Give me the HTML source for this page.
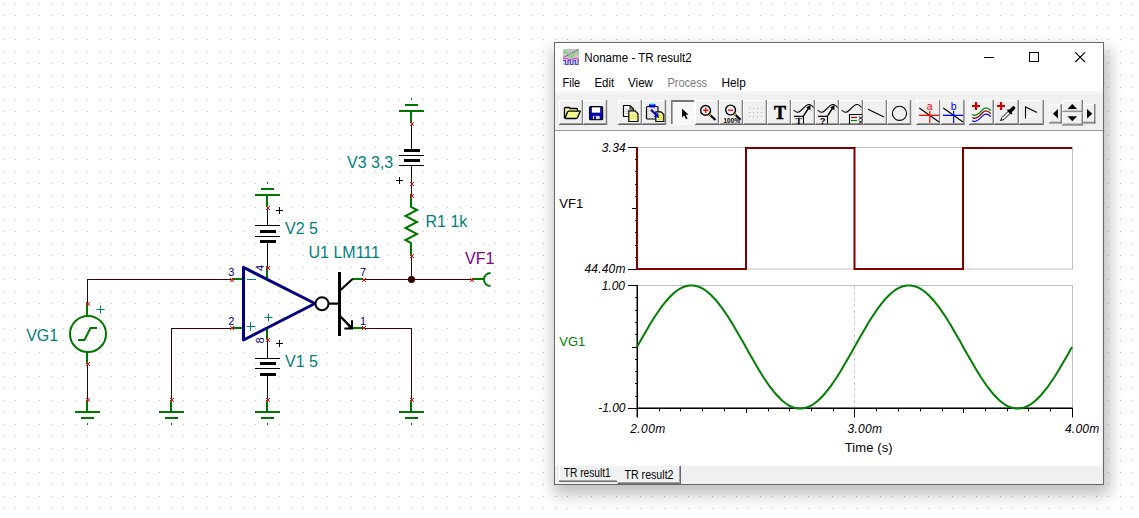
<!DOCTYPE html>
<html lang="en"><head><meta charset="utf-8"><title>Noname - TR result2</title>
<style>html,body{margin:0;padding:0;background:#fff;overflow:hidden}svg{display:block;position:absolute;left:0;top:0}text{font-family:"Liberation Sans",Arial,sans-serif}.lbl{font-size:16px;fill:#008080}.pin{font-size:11px;fill:#000080}.ax{font-size:12px;font-style:italic;fill:#000}.ui{font-size:12px;fill:#000}</style></head><body>
<svg width="1139" height="518" viewBox="0 0 1139 518">
<defs>
<pattern id="g" x="0" y="0" width="12" height="12" patternUnits="userSpaceOnUse"><rect x="3" y="3" width="1" height="1" fill="#c0c0c0"/></pattern>
<pattern id="gx" x="1" y="0" width="12" height="12" patternUnits="userSpaceOnUse"><rect x="3" y="3" width="1" height="1" fill="#c0c0c0"/></pattern>
<pattern id="gy" x="0" y="1" width="12" height="12" patternUnits="userSpaceOnUse"><rect x="3" y="3" width="1" height="1" fill="#c0c0c0"/></pattern>
<pattern id="gxy" x="1" y="1" width="12" height="12" patternUnits="userSpaceOnUse"><rect x="3" y="3" width="1" height="1" fill="#c0c0c0"/></pattern>
<filter id="sh" x="-10%" y="-10%" width="120%" height="125%"><feGaussianBlur stdDeviation="8"/></filter>
</defs>
<rect width="1139" height="518" fill="#fff"/>
<rect x="0" y="0" width="610" height="322" fill="url(#g)"/>
<rect x="610" y="0" width="529" height="322" fill="url(#gx)"/>
<rect x="0" y="322" width="610" height="196" fill="url(#gy)"/>
<rect x="610" y="322" width="529" height="196" fill="url(#gxy)"/>
<g id="circuit">
<rect x="87" y="279" width="146" height="1" fill="#400000"/>
<rect x="87" y="279" width="1" height="25" fill="#400000"/>
<rect x="87" y="364" width="1" height="37" fill="#400000"/>
<rect x="171" y="328" width="62" height="1" fill="#400000"/>
<rect x="171" y="328" width="1" height="73" fill="#400000"/>
<rect x="363" y="279" width="110" height="1" fill="#400000"/>
<rect x="363" y="328" width="49" height="1" fill="#400000"/>
<rect x="411" y="328" width="1" height="73" fill="#400000"/>
<rect x="411" y="255" width="1" height="25" fill="#400000"/>
<rect x="411" y="183" width="1" height="14" fill="#400000"/>
<circle cx="411.5" cy="279.5" r="3.6" fill="#300000"/>
<rect x="86" y="303" width="2" height="13" fill="#007800"/>
<rect x="86" y="352" width="2" height="12" fill="#007800"/>
<circle cx="88" cy="334" r="18" fill="none" stroke="#007800" stroke-width="2"/>
<path d="M78 340H84.5L90.5 328H97" fill="none" stroke="#007800" stroke-width="2"/>
<path d="M96.5 309.5h8M100.5 305.5v8" stroke="#008080" stroke-width="1" fill="none"/>
<text class="lbl" x="26.2" y="340.5">VG1</text>
<rect x="86" y="400" width="2" height="12" fill="#007800"/><rect x="75" y="411" width="25" height="2" fill="#007800"/><rect x="81" y="417" width="13" height="2" fill="#007800"/><rect x="87" y="423" width="1" height="2" fill="#007800"/>
<rect x="170" y="400" width="2" height="12" fill="#007800"/><rect x="159" y="411" width="25" height="2" fill="#007800"/><rect x="165" y="417" width="13" height="2" fill="#007800"/><rect x="171" y="423" width="1" height="2" fill="#007800"/>
<rect x="266" y="400" width="2" height="12" fill="#007800"/><rect x="255" y="411" width="25" height="2" fill="#007800"/><rect x="261" y="417" width="13" height="2" fill="#007800"/><rect x="267" y="423" width="1" height="2" fill="#007800"/>
<rect x="410" y="400" width="2" height="12" fill="#007800"/><rect x="399" y="411" width="25" height="2" fill="#007800"/><rect x="405" y="417" width="13" height="2" fill="#007800"/><rect x="411" y="423" width="1" height="2" fill="#007800"/>
<rect x="266" y="195" width="2" height="12" fill="#007800"/><rect x="255" y="194" width="25" height="2" fill="#007800"/><rect x="261" y="188" width="13" height="2" fill="#007800"/><rect x="267" y="182" width="1" height="2" fill="#007800"/>
<rect x="410" y="111" width="2" height="12" fill="#007800"/><rect x="399" y="110" width="25" height="2" fill="#007800"/><rect x="405" y="104" width="13" height="2" fill="#007800"/><rect x="411" y="98" width="1" height="2" fill="#007800"/>
<rect x="267" y="207" width="1" height="18" fill="#000"/><rect x="267" y="240" width="1" height="27" fill="#000"/><rect x="255" y="225" width="25" height="1" fill="#000"/><rect x="260" y="230" width="16" height="3" fill="#000"/><rect x="255" y="236" width="25" height="1" fill="#000"/><rect x="260" y="240" width="16" height="3" fill="#000"/><rect x="276" y="210" width="7" height="1" fill="#000"/><rect x="279" y="207" width="1" height="7" fill="#000"/>
<rect x="267" y="340" width="1" height="18" fill="#000"/><rect x="267" y="373" width="1" height="27" fill="#000"/><rect x="255" y="358" width="25" height="1" fill="#000"/><rect x="260" y="362" width="16" height="3" fill="#000"/><rect x="255" y="368" width="25" height="1" fill="#000"/><rect x="260" y="373" width="16" height="3" fill="#000"/><rect x="276" y="343" width="7" height="1" fill="#000"/><rect x="279" y="340" width="1" height="7" fill="#000"/>
<rect x="411" y="123" width="1" height="26" fill="#000"/><rect x="411" y="165" width="1" height="18" fill="#000"/><rect x="404" y="149" width="16" height="3" fill="#000"/><rect x="399" y="155" width="25" height="1" fill="#000"/><rect x="404" y="159" width="16" height="3" fill="#000"/><rect x="399" y="165" width="25" height="1" fill="#000"/><rect x="396" y="180" width="7" height="1" fill="#000"/><rect x="399" y="177" width="1" height="7" fill="#000"/>
<text class="lbl" x="285" y="233.5">V2 5</text>
<text class="lbl" x="285" y="366.5">V1 5</text>
<text class="lbl" x="347" y="167.5">V3 3,3</text>
<path d="M411 195V207L417 210L405.5 216L417 222L405.5 228L417 234L405.5 240L411 243V256" fill="none" stroke="#007800" stroke-width="2" stroke-linejoin="miter"/>
<text class="lbl" x="425.5" y="226.5">R1 1k</text>
<rect x="232" y="278" width="11" height="2" fill="#007800"/>
<rect x="232" y="327" width="11" height="2" fill="#007800"/>
<rect x="266" y="267" width="2" height="12" fill="#007800"/>
<rect x="266" y="329" width="2" height="11" fill="#007800"/>
<rect x="352" y="278" width="11" height="2" fill="#007800"/>
<rect x="352" y="327" width="11" height="2" fill="#007800"/>
<path d="M243.5 267.4L243.5 340L315 303.5Z" fill="none" stroke="#000080" stroke-width="3" stroke-linejoin="round"/>
<path d="M247 279.5h9" stroke="#008080" stroke-width="1"/>
<path d="M246.5 326.5h9M250.5 322v9" stroke="#008080" stroke-width="1" fill="none"/>
<path d="M264.5 317.5h8M268.5 313.5v8" stroke="#008080" stroke-width="1" fill="none"/>
<circle cx="322" cy="303.7" r="6.5" fill="#fff" stroke="#000" stroke-width="2"/>
<rect x="329" y="302.5" width="10" height="2.2" fill="#000"/>
<rect x="338" y="272" width="3" height="64" fill="#000"/>
<path d="M340 290.5L352.5 279" stroke="#000" stroke-width="2.2" fill="none"/>
<path d="M340 316L351.5 327.8" stroke="#000" stroke-width="2.4" fill="none"/>
<path d="M352 320.3V328.4H344.3" fill="none" stroke="#000" stroke-width="2" stroke-linejoin="miter"/>
<path d="M349 324.5L351.5 327.5L348 327.5Z" fill="#000"/>
<text class="pin" x="228.3" y="276">3</text>
<text class="pin" x="228.3" y="324.5">2</text>
<text class="pin" x="360" y="276">7</text>
<text class="pin" x="360" y="324.5">1</text>
<text class="pin" transform="translate(264 271) rotate(-90)">4</text>
<text class="pin" transform="translate(264 343.5) rotate(-90)">8</text>
<text class="lbl" x="308.5" y="257.5">U1 LM111</text>
<rect x="472" y="278" width="12" height="2" fill="#007800"/>
<path d="M490.5 273A6.5 6.5 0 0 0 490.5 286" fill="none" stroke="#007800" stroke-width="2"/>
<text class="lbl" style="fill:#800080" x="465" y="263.5">VF1</text>
<path d="M86 302h1v1h-1zM89 302h1v1h-1zM86 305h1v1h-1zM89 305h1v1h-1zM87 303h2v2h-2z" fill="#ff0000"/>
<path d="M86 362h1v1h-1zM89 362h1v1h-1zM86 365h1v1h-1zM89 365h1v1h-1zM87 363h2v2h-2z" fill="#ff0000"/>
<path d="M86 398h1v1h-1zM89 398h1v1h-1zM86 401h1v1h-1zM89 401h1v1h-1zM87 399h2v2h-2z" fill="#ff0000"/>
<path d="M170 398h1v1h-1zM173 398h1v1h-1zM170 401h1v1h-1zM173 401h1v1h-1zM171 399h2v2h-2z" fill="#ff0000"/>
<path d="M266 398h1v1h-1zM269 398h1v1h-1zM266 401h1v1h-1zM269 401h1v1h-1zM267 399h2v2h-2z" fill="#ff0000"/>
<path d="M410 398h1v1h-1zM413 398h1v1h-1zM410 401h1v1h-1zM413 401h1v1h-1zM411 399h2v2h-2z" fill="#ff0000"/>
<path d="M230 278h1v1h-1zM233 278h1v1h-1zM230 281h1v1h-1zM233 281h1v1h-1zM231 279h2v2h-2z" fill="#ff0000"/>
<path d="M230 326h1v1h-1zM233 326h1v1h-1zM230 329h1v1h-1zM233 329h1v1h-1zM231 327h2v2h-2z" fill="#ff0000"/>
<path d="M266 266h1v1h-1zM269 266h1v1h-1zM266 269h1v1h-1zM269 269h1v1h-1zM267 267h2v2h-2z" fill="#ff0000"/>
<path d="M266 338h1v1h-1zM269 338h1v1h-1zM266 341h1v1h-1zM269 341h1v1h-1zM267 339h2v2h-2z" fill="#ff0000"/>
<path d="M362 278h1v1h-1zM365 278h1v1h-1zM362 281h1v1h-1zM365 281h1v1h-1zM363 279h2v2h-2z" fill="#ff0000"/>
<path d="M362 326h1v1h-1zM365 326h1v1h-1zM362 329h1v1h-1zM365 329h1v1h-1zM363 327h2v2h-2z" fill="#ff0000"/>
<path d="M266 206h1v1h-1zM269 206h1v1h-1zM266 209h1v1h-1zM269 209h1v1h-1zM267 207h2v2h-2z" fill="#ff0000"/>
<path d="M410 122h1v1h-1zM413 122h1v1h-1zM410 125h1v1h-1zM413 125h1v1h-1zM411 123h2v2h-2z" fill="#ff0000"/>
<path d="M410 182h1v1h-1zM413 182h1v1h-1zM410 185h1v1h-1zM413 185h1v1h-1zM411 183h2v2h-2z" fill="#ff0000"/>
<path d="M410 194h1v1h-1zM413 194h1v1h-1zM410 197h1v1h-1zM413 197h1v1h-1zM411 195h2v2h-2z" fill="#ff0000"/>
<path d="M410 254h1v1h-1zM413 254h1v1h-1zM410 257h1v1h-1zM413 257h1v1h-1zM411 255h2v2h-2z" fill="#ff0000"/>
<path d="M470 278h1v1h-1zM473 278h1v1h-1zM470 281h1v1h-1zM473 281h1v1h-1zM471 279h2v2h-2z" fill="#ff0000"/>
</g>
<g id="win">
<rect x="553" y="48" width="557" height="447" fill="#000" opacity="0.25" filter="url(#sh)"/>
<rect x="554.5" y="42.5" width="549" height="442" fill="#fff" stroke="#686868" stroke-width="1"/>
<g transform="translate(563 49)"><rect x="0" y="0" width="16" height="10" fill="#c4c4c4"/><rect x="0" y="10" width="16" height="6" fill="#d8d4c4"/><path d="M0.3 8.7L15.7 0.4" stroke="#8c2c8c" stroke-width="1" stroke-dasharray="1.2 0.8" fill="none"/><path d="M0 3.6Q2 1.2 4 3.8L6 6.5Q8 9.3 10 6.6L12 3.8Q14 1.4 16 4.2" stroke="#58e058" stroke-width="1.1" fill="none"/><path d="M0 9.6H4.8V10.3H9.8V9.6H14.8V10.3H16" stroke="#e040e0" stroke-width="1" fill="none"/><path d="M0 11.5H2.5V15.5H5V11.5H7.4V15.5H10V11.5H12.4V15.5H15V11.5H16" stroke="#4848e8" stroke-width="1.1" fill="none"/></g>
<text class="ui" x="584.3" y="62" textLength="107.5" lengthAdjust="spacingAndGlyphs">Noname - TR result2</text>
<path d="M984 57.5h10" stroke="#000" stroke-width="1"/>
<rect x="1029.5" y="52.5" width="9" height="9" fill="none" stroke="#000" stroke-width="1"/>
<path d="M1075.3 52.3l9.7 9.7M1085 52.3l-9.7 9.7" stroke="#000" stroke-width="1.1" fill="none"/>
<text class="ui" x="562.6" y="86.7" fill="#000" style="fill:#000" textLength="17.6" lengthAdjust="spacingAndGlyphs">File</text>
<text class="ui" x="594.5" y="86.7" fill="#000" style="fill:#000" textLength="19.6" lengthAdjust="spacingAndGlyphs">Edit</text>
<text class="ui" x="628.0" y="86.7" fill="#000" style="fill:#000" textLength="25" lengthAdjust="spacingAndGlyphs">View</text>
<text class="ui" x="667.5" y="86.7" fill="#7a7a7a" style="fill:#7a7a7a" textLength="39.6" lengthAdjust="spacingAndGlyphs">Process</text>
<text class="ui" x="721.5" y="86.7" fill="#000" style="fill:#000" textLength="24.3" lengthAdjust="spacingAndGlyphs">Help</text>
<rect x="555" y="91" width="548" height="2.5" fill="#f6f6f6"/>
<rect x="555" y="93.5" width="548" height="36.5" fill="#f0f0f0"/>
<rect x="555" y="130" width="548" height="1" fill="#9a9a9a"/>
<rect x="559" y="100" width="24.2" height="25" fill="#f0f0f0"/><rect x="559" y="100" width="24.2" height="1" fill="#fff"/><rect x="559" y="100" width="1" height="25" fill="#fff"/><rect x="560" y="123" width="23.2" height="1" fill="#9a9a9a"/><rect x="559" y="124" width="24.2" height="1" fill="#646464"/><rect x="581.7" y="100" width="1.5" height="25" fill="#828282"/>
<rect x="583" y="100" width="24.2" height="25" fill="#f0f0f0"/><rect x="583" y="100" width="24.2" height="1" fill="#fff"/><rect x="583" y="100" width="1" height="25" fill="#fff"/><rect x="584" y="123" width="23.2" height="1" fill="#9a9a9a"/><rect x="583" y="124" width="24.2" height="1" fill="#646464"/><rect x="605.7" y="100" width="1.5" height="25" fill="#828282"/>
<rect x="618" y="100" width="24.2" height="25" fill="#f0f0f0"/><rect x="618" y="100" width="24.2" height="1" fill="#fff"/><rect x="618" y="100" width="1" height="25" fill="#fff"/><rect x="619" y="123" width="23.2" height="1" fill="#9a9a9a"/><rect x="618" y="124" width="24.2" height="1" fill="#646464"/><rect x="640.7" y="100" width="1.5" height="25" fill="#828282"/>
<rect x="642" y="100" width="24.2" height="25" fill="#f0f0f0"/><rect x="642" y="100" width="24.2" height="1" fill="#fff"/><rect x="642" y="100" width="1" height="25" fill="#fff"/><rect x="643" y="123" width="23.2" height="1" fill="#9a9a9a"/><rect x="642" y="124" width="24.2" height="1" fill="#646464"/><rect x="664.7" y="100" width="1.5" height="25" fill="#828282"/>
<rect x="671" y="100" width="24.2" height="25" fill="#f8f8f8"/><rect x="671" y="100" width="24.2" height="2" fill="#787878"/><rect x="671" y="100" width="1.6" height="25" fill="#787878"/><rect x="671" y="124" width="24.2" height="1" fill="#fff"/><rect x="694.2" y="100" width="1" height="25" fill="#fff"/>
<rect x="695" y="100" width="24.2" height="25" fill="#f0f0f0"/><rect x="695" y="100" width="24.2" height="1" fill="#fff"/><rect x="695" y="100" width="1" height="25" fill="#fff"/><rect x="696" y="123" width="23.2" height="1" fill="#9a9a9a"/><rect x="695" y="124" width="24.2" height="1" fill="#646464"/><rect x="717.7" y="100" width="1.5" height="25" fill="#828282"/>
<rect x="719" y="100" width="24.2" height="25" fill="#f0f0f0"/><rect x="719" y="100" width="24.2" height="1" fill="#fff"/><rect x="719" y="100" width="1" height="25" fill="#fff"/><rect x="720" y="123" width="23.2" height="1" fill="#9a9a9a"/><rect x="719" y="124" width="24.2" height="1" fill="#646464"/><rect x="741.7" y="100" width="1.5" height="25" fill="#828282"/>
<rect x="743" y="100" width="24.2" height="25" fill="#f0f0f0"/><rect x="743" y="100" width="24.2" height="1" fill="#fff"/><rect x="743" y="100" width="1" height="25" fill="#fff"/><rect x="744" y="123" width="23.2" height="1" fill="#9a9a9a"/><rect x="743" y="124" width="24.2" height="1" fill="#646464"/><rect x="765.7" y="100" width="1.5" height="25" fill="#828282"/>
<rect x="767" y="100" width="24.2" height="25" fill="#f0f0f0"/><rect x="767" y="100" width="24.2" height="1" fill="#fff"/><rect x="767" y="100" width="1" height="25" fill="#fff"/><rect x="768" y="123" width="23.2" height="1" fill="#9a9a9a"/><rect x="767" y="124" width="24.2" height="1" fill="#646464"/><rect x="789.7" y="100" width="1.5" height="25" fill="#828282"/>
<rect x="791" y="100" width="24.2" height="25" fill="#f0f0f0"/><rect x="791" y="100" width="24.2" height="1" fill="#fff"/><rect x="791" y="100" width="1" height="25" fill="#fff"/><rect x="792" y="123" width="23.2" height="1" fill="#9a9a9a"/><rect x="791" y="124" width="24.2" height="1" fill="#646464"/><rect x="813.7" y="100" width="1.5" height="25" fill="#828282"/>
<rect x="815" y="100" width="24.2" height="25" fill="#f0f0f0"/><rect x="815" y="100" width="24.2" height="1" fill="#fff"/><rect x="815" y="100" width="1" height="25" fill="#fff"/><rect x="816" y="123" width="23.2" height="1" fill="#9a9a9a"/><rect x="815" y="124" width="24.2" height="1" fill="#646464"/><rect x="837.7" y="100" width="1.5" height="25" fill="#828282"/>
<rect x="839" y="100" width="24.2" height="25" fill="#f0f0f0"/><rect x="839" y="100" width="24.2" height="1" fill="#fff"/><rect x="839" y="100" width="1" height="25" fill="#fff"/><rect x="840" y="123" width="23.2" height="1" fill="#9a9a9a"/><rect x="839" y="124" width="24.2" height="1" fill="#646464"/><rect x="861.7" y="100" width="1.5" height="25" fill="#828282"/>
<rect x="863" y="100" width="24.2" height="25" fill="#f0f0f0"/><rect x="863" y="100" width="24.2" height="1" fill="#fff"/><rect x="863" y="100" width="1" height="25" fill="#fff"/><rect x="864" y="123" width="23.2" height="1" fill="#9a9a9a"/><rect x="863" y="124" width="24.2" height="1" fill="#646464"/><rect x="885.7" y="100" width="1.5" height="25" fill="#828282"/>
<rect x="887" y="100" width="24.2" height="25" fill="#f0f0f0"/><rect x="887" y="100" width="24.2" height="1" fill="#fff"/><rect x="887" y="100" width="1" height="25" fill="#fff"/><rect x="888" y="123" width="23.2" height="1" fill="#9a9a9a"/><rect x="887" y="124" width="24.2" height="1" fill="#646464"/><rect x="909.7" y="100" width="1.5" height="25" fill="#828282"/>
<rect x="916.3" y="100" width="24.2" height="25" fill="#f0f0f0"/><rect x="916.3" y="100" width="24.2" height="1" fill="#fff"/><rect x="916.3" y="100" width="1" height="25" fill="#fff"/><rect x="917.3" y="123" width="23.2" height="1" fill="#9a9a9a"/><rect x="916.3" y="124" width="24.2" height="1" fill="#646464"/><rect x="939.0" y="100" width="1.5" height="25" fill="#828282"/>
<rect x="940.4" y="100" width="24.2" height="25" fill="#f0f0f0"/><rect x="940.4" y="100" width="24.2" height="1" fill="#fff"/><rect x="940.4" y="100" width="1" height="25" fill="#fff"/><rect x="941.4" y="123" width="23.2" height="1" fill="#9a9a9a"/><rect x="940.4" y="124" width="24.2" height="1" fill="#646464"/><rect x="963.1" y="100" width="1.5" height="25" fill="#828282"/>
<rect x="969" y="100" width="25" height="25" fill="#f0f0f0"/><rect x="969" y="100" width="25" height="1" fill="#fff"/><rect x="969" y="100" width="1" height="25" fill="#fff"/><rect x="970" y="123" width="24" height="1" fill="#9a9a9a"/><rect x="969" y="124" width="25" height="1" fill="#646464"/><rect x="992.5" y="100" width="1.5" height="25" fill="#828282"/>
<rect x="994" y="100" width="25" height="25" fill="#f0f0f0"/><rect x="994" y="100" width="25" height="1" fill="#fff"/><rect x="994" y="100" width="1" height="25" fill="#fff"/><rect x="995" y="123" width="24" height="1" fill="#9a9a9a"/><rect x="994" y="124" width="25" height="1" fill="#646464"/><rect x="1017.5" y="100" width="1.5" height="25" fill="#828282"/>
<rect x="1019" y="100" width="25" height="25" fill="#f0f0f0"/><rect x="1019" y="100" width="25" height="1" fill="#fff"/><rect x="1019" y="100" width="1" height="25" fill="#fff"/><rect x="1020" y="123" width="24" height="1" fill="#9a9a9a"/><rect x="1019" y="124" width="25" height="1" fill="#646464"/><rect x="1042.5" y="100" width="1.5" height="25" fill="#828282"/>
<g><path d="M564.5 118V108.5Q564.5 107.5 565.5 107.5H569Q570 107.5 570 108.5H576.5Q577.5 108.5 577.5 109.5V111.5" fill="#f6f690" stroke="#000" stroke-width="1.3"/><path d="M565 118.3L567.5 112Q568 111.2 569 111.2H580.3L577.5 117.5Q577 118.5 576 118.5H565.5Z" fill="#f6f690" stroke="#000" stroke-width="1.3" stroke-linejoin="round"/></g>
<g><rect x="589.6" y="106.6" width="13" height="13" rx="1.2" fill="#0000ff" stroke="#000" stroke-width="1.3"/><rect x="591.5" y="107" width="9" height="6" fill="#fff" stroke="#000" stroke-width="0.6"/><rect x="592.5" y="115.5" width="7.5" height="3.8" fill="#d8d8d8" stroke="#000" stroke-width="0.6"/><rect x="594" y="116.3" width="2" height="2.7" fill="#0000e0"/></g>
<g><path d="M623.5 105.5H630L633.5 109V116.5H623.5Z" fill="#fff" stroke="#000" stroke-width="1.2"/><path d="M630 105.5V109H633.5" fill="none" stroke="#000" stroke-width="1"/><path d="M625.5 109.5h4M625.5 111.5h3M625.5 113.5h3" stroke="#c0c0c0" stroke-width="1"/><path d="M628.8 110.8H635L638 113.8V121.5H628.8Z" fill="#f8f8a0" stroke="#000" stroke-width="1.2"/><path d="M630.5 114.5h6M630.5 116.5h6M630.5 118.5h6" stroke="#e8e000" stroke-width="1"/><path d="M632 113v7M634.5 113v7" stroke="#fff" stroke-width="0.8"/></g>
<g><rect x="646.5" y="106.5" width="11.5" height="12.5" rx="1" fill="#e4e4e4" stroke="#000" stroke-width="1.2"/><rect x="649" y="104" width="6.5" height="3.5" rx="1" fill="#0000e0"/><rect x="650" y="103.5" width="4.5" height="1.3" fill="#00e0ff"/><path d="M655.8 111.8H661L663.8 114.5V121.5H655.8Z" fill="#f8f8a0" stroke="#000" stroke-width="1.2"/><path d="M658 115.5h4.5M658 117.5h4.5M658 119.5h4.5" stroke="#e8e000" stroke-width="1"/><path d="M651 109.8L656.5 115.3" stroke="#0000b0" stroke-width="2"/><path d="M659 117.8L653.6 116.8L658 112.4Z" fill="#0000e0"/></g>
<path d="M682 108.5V117.5L684.2 115.5L686 119.3L687.6 118.5L685.8 114.8L688.6 114.8Z" fill="#000"/>
<g><circle cx="705.6" cy="110.4" r="4.9" fill="#f0f0f0" stroke="#000" stroke-width="1.4"/><path d="M703 110.4h5.4M705.7 107.7v5.4" stroke="#ff0000" stroke-width="1.3"/><path d="M709.3 114.2L715.5 120" stroke="#000" stroke-width="2.2"/><path d="M709.3 114.2L710.8 115.6" stroke="#e8e000" stroke-width="1.2"/></g>
<g><circle cx="730.6" cy="110" r="4.9" fill="#f0f0f0" stroke="#000" stroke-width="1.4"/><path d="M728 110.2h5.2" stroke="#ff0000" stroke-width="1.3"/><path d="M734.3 113.8L740.5 119.8" stroke="#000" stroke-width="2.2"/><path d="M734.3 113.8L735.8 115.2" stroke="#e8e000" stroke-width="1.2"/><text x="723.5" y="123.4" style="font-size:8px;font-weight:bold;fill:#000" textLength="16.5" lengthAdjust="spacingAndGlyphs">100%</text></g>
<g><rect x="749" y="108" width="1" height="1" fill="#b8b8b8"/><rect x="749" y="112" width="1" height="1" fill="#b8b8b8"/><rect x="749" y="116" width="1" height="1" fill="#b8b8b8"/><rect x="753" y="108" width="1" height="1" fill="#b8b8b8"/><rect x="753" y="112" width="1" height="1" fill="#b8b8b8"/><rect x="753" y="116" width="1" height="1" fill="#b8b8b8"/><rect x="757" y="108" width="1" height="1" fill="#b8b8b8"/><rect x="757" y="112" width="1" height="1" fill="#b8b8b8"/><rect x="757" y="116" width="1" height="1" fill="#b8b8b8"/><rect x="761" y="108" width="1" height="1" fill="#b8b8b8"/><rect x="761" y="112" width="1" height="1" fill="#b8b8b8"/><rect x="761" y="116" width="1" height="1" fill="#b8b8b8"/></g>
<text x="774" y="119" style="font-family:'Liberation Serif',serif;font-size:18px;font-weight:bold;fill:#000;stroke:#000;stroke-width:0.5px" textLength="12" lengthAdjust="spacingAndGlyphs">T</text>
<g><path d="M793.8 110Q797 114.2 801 110.5L805.5 106.2Q809.5 102.2 813.5 107.5" fill="none" stroke="#000" stroke-width="1.1"/><path d="M794 116.4H804M803.5 116V123.5" stroke="#000" stroke-width="1.1" fill="none"/><path d="M803.5 115.8L809 107.5" stroke="#000" stroke-width="1.4"/><path d="M810.6 104.8L810.3 110.3L806.3 107.6Z" fill="#000"/><text x="795.6" y="123.5" style="font-family:'Liberation Serif',serif;font-size:8.5px;font-weight:bold;fill:#000" textLength="6.6" lengthAdjust="spacingAndGlyphs">T</text></g>
<g><path d="M817.8 110Q821 114.2 825 110.5L829.5 106.2Q833.5 102.2 837.5 107.5" fill="none" stroke="#000" stroke-width="1.1"/><path d="M818 116.4H828M827.5 116V123.5" stroke="#000" stroke-width="1.1" fill="none"/><path d="M827.5 115.8L833 107.5" stroke="#000" stroke-width="1.4"/><path d="M834.6 104.8L834.3 110.3L830.3 107.6Z" fill="#000"/><text x="819.8" y="124.3" style="font-size:9.5px;font-weight:bold;fill:#000">?</text></g>
<g><path d="M841.8 110Q845 114.2 849 110.5L853.5 106.2Q857.5 102.2 861.5 107.5" fill="none" stroke="#000" stroke-width="1.1"/><path d="M849.5 124V114.5H862" stroke="#000" stroke-width="1.1" fill="none"/><path d="M851 117.4h6" stroke="#900000" stroke-width="1.1"/><path d="M851 120.5h6" stroke="#008000" stroke-width="1.1"/><path d="M859 116.5l3 3M862 116.5l-3 3M859 120.5l3 3M862 120.5l-3 3" stroke="#000" stroke-width="1"/></g>
<path d="M868 109.2L884 116.9" stroke="#000" stroke-width="1.1"/>
<circle cx="899.5" cy="113.3" r="7.1" fill="none" stroke="#000" stroke-width="1.1"/>
<g><path d="M919.3 108L939 122" stroke="#000" stroke-width="1.1"/><path d="M919 115.4H939M929.8 111V123" stroke="#ff0000" stroke-width="1.2" fill="none"/><text x="926.8" y="109.7" style="font-size:10.5px;fill:#ff0000">a</text></g>
<g><path d="M943.3 108L963 122" stroke="#000" stroke-width="1.1"/><path d="M943 115.4H963M953.6 111V123" stroke="#0000ff" stroke-width="1.2" fill="none"/><text x="950.8" y="109.7" style="font-size:10.5px;fill:#0000ff">b</text></g>
<g><path d="M972 106h8M976 102v8" stroke="#d00000" stroke-width="2.2"/><path d="M972.3 114.5Q975.3 116.7 979.3 113.0L982.8 109.5Q986.3 105.9 990.8 110.5" fill="none" stroke="#008000" stroke-width="1.1"/><path d="M972.3 117.5Q975.3 119.7 979.3 116.0L982.8 112.5Q986.3 108.9 990.8 113.5" fill="none" stroke="#800000" stroke-width="1.1"/><path d="M972.3 120.7Q975.3 122.9 979.3 119.2L982.8 115.7Q986.3 112.10000000000001 990.8 116.7" fill="none" stroke="#0000ff" stroke-width="1.1"/></g>
<g><path d="M997 106h8M1001 102v8" stroke="#d00000" stroke-width="2.2"/><path d="M1000.5 120.5L1002 117.5L1008.5 111L1010.5 113L1004 119.5Z" fill="#fff" stroke="#000" stroke-width="1"/><path d="M1007.5 109.5L1012 114" stroke="#000" stroke-width="1.6"/><path d="M1010 111.5L1013.5 108" stroke="#000" stroke-width="3.6" stroke-linecap="round"/></g>
<g><path d="M1037 112.8L1025.5 118.3" stroke="#fff" stroke-width="1.2"/><path d="M1025.5 118.5V107L1037 112.6" stroke="#000" stroke-width="1.1" fill="none"/></g>
<rect x="1049" y="104" width="13" height="19.5" fill="#f0f0f0"/><rect x="1049" y="104" width="13" height="1" fill="#fff"/><rect x="1049" y="104" width="1" height="19.5" fill="#fff"/><rect x="1050" y="121.5" width="12" height="1" fill="#9a9a9a"/><rect x="1049" y="122.5" width="13" height="1" fill="#646464"/><rect x="1060.5" y="104" width="1.5" height="19.5" fill="#828282"/>
<rect x="1082.5" y="104" width="13" height="19.5" fill="#f0f0f0"/><rect x="1082.5" y="104" width="13" height="1" fill="#fff"/><rect x="1082.5" y="104" width="1" height="19.5" fill="#fff"/><rect x="1083.5" y="121.5" width="12" height="1" fill="#9a9a9a"/><rect x="1082.5" y="122.5" width="13" height="1" fill="#646464"/><rect x="1094.0" y="104" width="1.5" height="19.5" fill="#828282"/>
<rect x="1062" y="100" width="21" height="12.5" fill="#f0f0f0"/><rect x="1062" y="100" width="21" height="1" fill="#fff"/><rect x="1062" y="100" width="1" height="12.5" fill="#fff"/><rect x="1063" y="110.5" width="20" height="1" fill="#9a9a9a"/><rect x="1062" y="111.5" width="21" height="1" fill="#646464"/><rect x="1081.5" y="100" width="1.5" height="12.5" fill="#828282"/>
<rect x="1062" y="112.5" width="21" height="13" fill="#f0f0f0"/><rect x="1062" y="112.5" width="21" height="1" fill="#fff"/><rect x="1062" y="112.5" width="1" height="13" fill="#fff"/><rect x="1063" y="123.5" width="20" height="1" fill="#9a9a9a"/><rect x="1062" y="124.5" width="21" height="1" fill="#646464"/><rect x="1081.5" y="112.5" width="1.5" height="13" fill="#828282"/>
<path d="M1053 113.7L1058 109V118.4Z" fill="#000"/>
<path d="M1092.3 113.7L1087 109V118.4Z" fill="#000"/>
<path d="M1072.3 104L1067.5 109H1077.1Z" fill="#000"/>
<path d="M1072.3 121.3L1067.5 116.3H1077.1Z" fill="#000"/>
<rect x="1101.5" y="131" width="1.5" height="335" fill="#f0f0f0"/>
<rect x="637.5" y="147.5" width="435" height="121.5" fill="none" stroke="#c0c0c0" stroke-width="1"/>
<rect x="637.5" y="285.5" width="435" height="122.5" fill="none" stroke="#c0c0c0" stroke-width="1"/>
<path d="M854.5 286V408" stroke="#c8c8c8" stroke-width="1" stroke-dasharray="3 3"/>
<rect x="637" y="147" width="1" height="122" fill="#000"/>
<rect x="628" y="147" width="9" height="1" fill="#000"/>
<rect x="635" y="159" width="2" height="1" fill="#000"/>
<rect x="635" y="171" width="2" height="1" fill="#000"/>
<rect x="635" y="184" width="2" height="1" fill="#000"/>
<rect x="635" y="196" width="2" height="1" fill="#000"/>
<rect x="632" y="208" width="5" height="1" fill="#000"/>
<rect x="635" y="220" width="2" height="1" fill="#000"/>
<rect x="635" y="232" width="2" height="1" fill="#000"/>
<rect x="635" y="245" width="2" height="1" fill="#000"/>
<rect x="635" y="257" width="2" height="1" fill="#000"/>
<rect x="628" y="269" width="9" height="1" fill="#000"/>
<rect x="636.5" y="285" width="1.5" height="132" fill="#000"/>
<rect x="637" y="407.5" width="435.5" height="1.5" fill="#000"/>
<rect x="628" y="285" width="9" height="1" fill="#000"/>
<rect x="635" y="297" width="2" height="1" fill="#000"/>
<rect x="635" y="310" width="2" height="1" fill="#000"/>
<rect x="635" y="322" width="2" height="1" fill="#000"/>
<rect x="635" y="334" width="2" height="1" fill="#000"/>
<rect x="632" y="347" width="5" height="1" fill="#000"/>
<rect x="635" y="359" width="2" height="1" fill="#000"/>
<rect x="635" y="371" width="2" height="1" fill="#000"/>
<rect x="635" y="383" width="2" height="1" fill="#000"/>
<rect x="635" y="396" width="2" height="1" fill="#000"/>
<rect x="628" y="408" width="9" height="1" fill="#000"/>
<rect x="637" y="408" width="1" height="9.5" fill="#000"/>
<rect x="659" y="408" width="1" height="3.5" fill="#000"/>
<rect x="680" y="408" width="1" height="3.5" fill="#000"/>
<rect x="702" y="408" width="1" height="3.5" fill="#000"/>
<rect x="724" y="408" width="1" height="3.5" fill="#000"/>
<rect x="746" y="408" width="1" height="5" fill="#000"/>
<rect x="768" y="408" width="1" height="3.5" fill="#000"/>
<rect x="789" y="408" width="1" height="3.5" fill="#000"/>
<rect x="811" y="408" width="1" height="3.5" fill="#000"/>
<rect x="833" y="408" width="1" height="3.5" fill="#000"/>
<rect x="854" y="408" width="1" height="9.5" fill="#000"/>
<rect x="876" y="408" width="1" height="3.5" fill="#000"/>
<rect x="898" y="408" width="1" height="3.5" fill="#000"/>
<rect x="920" y="408" width="1" height="3.5" fill="#000"/>
<rect x="942" y="408" width="1" height="3.5" fill="#000"/>
<rect x="963" y="408" width="1" height="5" fill="#000"/>
<rect x="985" y="408" width="1" height="3.5" fill="#000"/>
<rect x="1007" y="408" width="1" height="3.5" fill="#000"/>
<rect x="1028" y="408" width="1" height="3.5" fill="#000"/>
<rect x="1050" y="408" width="1" height="3.5" fill="#000"/>
<rect x="1072" y="408" width="1" height="9.5" fill="#000"/>
<path d="M637 147V269H746V148H854.5V269H963V148H1072" fill="none" stroke="#800000" stroke-width="2" stroke-linejoin="miter"/>
<path d="M637.0 347.0L639.2 343.1L641.4 339.3L643.5 335.5L645.7 331.7L647.9 328.0L650.0 324.3L652.2 320.8L654.4 317.3L656.6 314.0L658.8 310.8L660.9 307.7L663.1 304.8L665.3 302.1L667.5 299.5L669.6 297.2L671.8 295.0L674.0 293.0L676.1 291.3L678.3 289.7L680.5 288.4L682.7 287.3L684.9 286.5L687.0 285.9L689.2 285.5L691.4 285.4L693.5 285.5L695.7 285.9L697.9 286.5L700.1 287.3L702.2 288.4L704.4 289.7L706.6 291.3L708.8 293.0L711.0 295.0L713.1 297.2L715.3 299.5L717.5 302.1L719.6 304.8L721.8 307.7L724.0 310.8L726.2 314.0L728.4 317.3L730.5 320.8L732.7 324.3L734.9 328.0L737.0 331.7L739.2 335.5L741.4 339.3L743.6 343.1L745.8 347.0L747.9 350.9L750.1 354.7L752.3 358.5L754.5 362.3L756.6 366.0L758.8 369.7L761.0 373.2L763.1 376.7L765.3 380.0L767.5 383.2L769.7 386.3L771.9 389.2L774.0 391.9L776.2 394.5L778.4 396.8L780.5 399.0L782.7 401.0L784.9 402.7L787.1 404.3L789.2 405.6L791.4 406.7L793.6 407.5L795.8 408.1L798.0 408.5L800.1 408.6L802.3 408.5L804.5 408.1L806.6 407.5L808.8 406.7L811.0 405.6L813.2 404.3L815.4 402.7L817.5 401.0L819.7 399.0L821.9 396.8L824.0 394.5L826.2 391.9L828.4 389.2L830.6 386.3L832.8 383.2L834.9 380.0L837.1 376.7L839.3 373.2L841.5 369.7L843.6 366.0L845.8 362.3L848.0 358.5L850.1 354.7L852.3 350.9L854.5 347.0L856.7 343.1L858.9 339.3L861.0 335.5L863.2 331.7L865.4 328.0L867.5 324.3L869.7 320.8L871.9 317.3L874.1 314.0L876.2 310.8L878.4 307.7L880.6 304.8L882.8 302.1L885.0 299.5L887.1 297.2L889.3 295.0L891.5 293.0L893.6 291.3L895.8 289.7L898.0 288.4L900.2 287.3L902.4 286.5L904.5 285.9L906.7 285.5L908.9 285.4L911.0 285.5L913.2 285.9L915.4 286.5L917.6 287.3L919.8 288.4L921.9 289.7L924.1 291.3L926.3 293.0L928.5 295.0L930.6 297.2L932.8 299.5L935.0 302.1L937.1 304.8L939.3 307.7L941.5 310.8L943.7 314.0L945.9 317.3L948.0 320.8L950.2 324.3L952.4 328.0L954.5 331.7L956.7 335.5L958.9 339.3L961.1 343.1L963.2 347.0L965.4 350.9L967.6 354.7L969.8 358.5L972.0 362.3L974.1 366.0L976.3 369.7L978.5 373.2L980.6 376.7L982.8 380.0L985.0 383.2L987.2 386.3L989.4 389.2L991.5 391.9L993.7 394.5L995.9 396.8L998.0 399.0L1000.2 401.0L1002.4 402.7L1004.6 404.3L1006.8 405.6L1008.9 406.7L1011.1 407.5L1013.3 408.1L1015.5 408.5L1017.6 408.6L1019.8 408.5L1022.0 408.1L1024.2 407.5L1026.3 406.7L1028.5 405.6L1030.7 404.3L1032.8 402.7L1035.0 401.0L1037.2 399.0L1039.4 396.8L1041.5 394.5L1043.7 391.9L1045.9 389.2L1048.1 386.3L1050.2 383.2L1052.4 380.0L1054.6 376.7L1056.8 373.2L1059.0 369.7L1061.1 366.0L1063.3 362.3L1065.5 358.5L1067.7 354.7L1069.8 350.9L1072.0 347.0" fill="none" stroke="#008000" stroke-width="2" stroke-linejoin="round"/>
<text class="ax" x="626" y="151.5" text-anchor="end" style="letter-spacing:0.25px">3.34</text>
<text class="ax" x="625.7" y="273" text-anchor="end" style="letter-spacing:0.2px">44.40m</text>
<text class="ax" x="625" y="289.7" text-anchor="end">1.00</text>
<text class="ax" x="625.5" y="412.3" text-anchor="end">-1.00</text>
<text class="ax" x="630.3" y="432.7" style="letter-spacing:0.4px">2.00m</text>
<text class="ax" x="847.5" y="432.7" style="letter-spacing:0.3px">3.00m</text>
<text class="ax" x="1065" y="432.7" style="letter-spacing:0.2px">4.00m</text>
<text x="844.7" y="452.3" style="font-size:13px;fill:#000;letter-spacing:0.1px">Time (s)</text>
<text x="559.3" y="208" style="font-size:13px;fill:#000">VF1</text>
<text x="559.3" y="345.8" style="font-size:13px;fill:#008000">VG1</text>
<rect x="555" y="466" width="548" height="18" fill="#f0f0f0"/>
<rect x="559" y="466" width="58" height="14" fill="#f0f0f0"/>
<rect x="559" y="466" width="1" height="15" fill="#fff"/>
<rect x="559" y="480" width="58" height="1" fill="#a8a8a8"/><rect x="559" y="481" width="58" height="1" fill="#6c6c6c"/>
<text x="563.8" y="476.8" style="font-size:12px;fill:#000" textLength="47" lengthAdjust="spacingAndGlyphs">TR result1</text>
<rect x="617.5" y="466" width="63" height="17.5" fill="#f2f2f2"/>
<rect x="617.5" y="482" width="63" height="1" fill="#a0a0a0"/><rect x="617.5" y="483" width="63" height="1" fill="#707070"/>
<rect x="679" y="466" width="1" height="17.5" fill="#a0a0a0"/><rect x="680" y="466" width="1" height="18" fill="#686868"/>
<text x="624.5" y="479" style="font-size:12px;fill:#000" textLength="49" lengthAdjust="spacingAndGlyphs">TR result2</text>
</g>
</svg></body></html>
